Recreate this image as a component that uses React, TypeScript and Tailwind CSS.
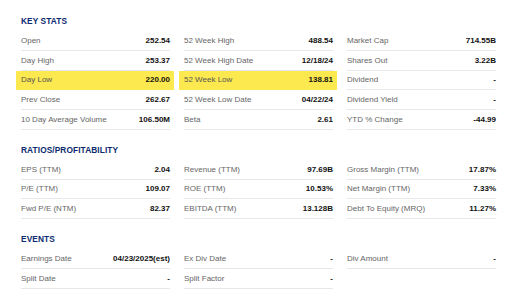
import React from "react";

type Item = { label: string; value: string; hl?: boolean };

const keyStats: Item[][] = [
  [
    { label: "Open", value: "252.54" },
    { label: "Day High", value: "253.37" },
    { label: "Day Low", value: "220.00", hl: true },
    { label: "Prev Close", value: "262.67" },
    { label: "10 Day Average Volume", value: "106.50M" },
  ],
  [
    { label: "52 Week High", value: "488.54" },
    { label: "52 Week High Date", value: "12/18/24" },
    { label: "52 Week Low", value: "138.81", hl: true },
    { label: "52 Week Low Date", value: "04/22/24" },
    { label: "Beta", value: "2.61" },
  ],
  [
    { label: "Market Cap", value: "714.55B" },
    { label: "Shares Out", value: "3.22B" },
    { label: "Dividend", value: "-" },
    { label: "Dividend Yield", value: "-" },
    { label: "YTD % Change", value: "-44.99" },
  ],
];

const ratios: Item[][] = [
  [
    { label: "EPS (TTM)", value: "2.04" },
    { label: "P/E (TTM)", value: "109.07" },
    { label: "Fwd P/E (NTM)", value: "82.37" },
  ],
  [
    { label: "Revenue (TTM)", value: "97.69B" },
    { label: "ROE (TTM)", value: "10.53%" },
    { label: "EBITDA (TTM)", value: "13.128B" },
  ],
  [
    { label: "Gross Margin (TTM)", value: "17.87%" },
    { label: "Net Margin (TTM)", value: "7.33%" },
    { label: "Debt To Equity (MRQ)", value: "11.27%" },
  ],
];

const events: Item[][] = [
  [
    { label: "Earnings Date", value: "04/23/2025(est)" },
    { label: "Split Date", value: "-" },
  ],
  [
    { label: "Ex Div Date", value: "-" },
    { label: "Split Factor", value: "-" },
  ],
  [{ label: "Div Amount", value: "-" }],
];

function Row({ item }: { item: Item }) {
  if (item.hl) {
    return (
      <div className="h-[19.75px] -ml-[5px] -mr-[4px] pl-[5px] pr-[4px] flex items-center justify-between bg-[#fbe94f]">
        <span className="text-[#555]">{item.label}</span>
        <span className="font-bold text-[#111]">{item.value}</span>
      </div>
    );
  }
  return (
    <div className="h-[19.75px] border-b border-[#e8e8e8] flex items-center justify-between pt-[1px]">
      <span className="text-[#666]">{item.label}</span>
      <span className="font-bold text-[#111]">{item.value}</span>
    </div>
  );
}

function Section({ title, cols, first }: { title: string; cols: Item[][]; first?: boolean }) {
  return (
    <div className={first ? "" : "mt-[10px]"}>
      <div className="h-[20px] flex items-center font-bold text-[8.3px] text-[#0b2a6f] tracking-[0.1px]">
        {title}
      </div>
      <div className="flex gap-[14px] items-start">
        {cols.map((col, i) => (
          <div key={i} className="w-[149px] flex flex-col">
            {col.map((it, j) => (
              <Row key={j} item={it} />
            ))}
          </div>
        ))}
      </div>
    </div>
  );
}

export default function App() {
  return (
    <div
      className="w-[511px] h-[300px] bg-white pl-[21px] pt-[11px] text-[8px] overflow-hidden"
      style={{ fontFamily: '"Liberation Sans", Arial, sans-serif' }}
    >
      <Section title="KEY STATS" cols={keyStats} first />
      <Section title="RATIOS/PROFITABILITY" cols={ratios} />
      <Section title="EVENTS" cols={events} />
    </div>
  );
}
